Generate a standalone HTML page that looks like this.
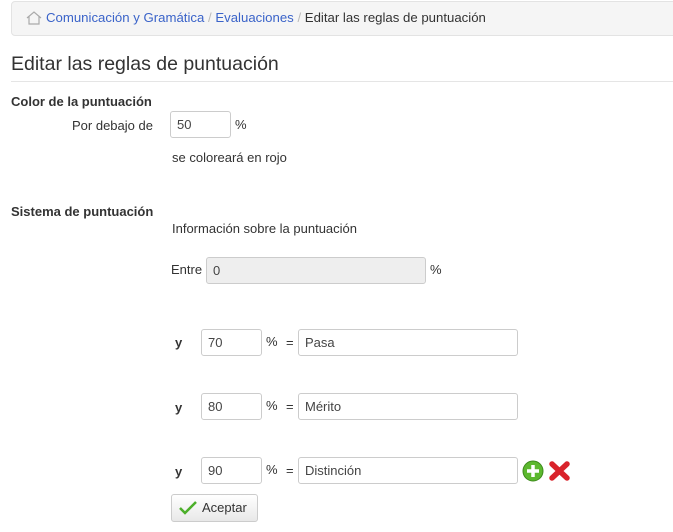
<!DOCTYPE html>
<html><head><meta charset="utf-8"><style>
body{margin:0;width:673px;height:532px;background:#fff;font-family:"Liberation Sans",sans-serif;font-size:13px;color:#333;position:relative;overflow:hidden}
.a{position:absolute;white-space:nowrap;line-height:16px}
.bc{position:absolute;left:11px;top:1px;width:680px;height:33px;background:#f5f5f5;border:1px solid #e3e3e3;border-radius:4px}
.inp{position:absolute;height:25px;border:1px solid #ccc;border-radius:3px;background:#fff;box-sizing:content-box;line-height:25px;padding-left:6px;font-size:13px;color:#444}
.b{font-weight:bold}
a{color:#3a63c9;text-decoration:none}
</style></head><body>
<div class="bc"></div>
<svg class="a" style="left:26px;top:11px" width="16" height="14" viewBox="0 0 16 14"><path d="M1 7 L8 1 L15 7 M3 5.5 V13 H13 V5.5" fill="none" stroke="#aaa" stroke-width="1.2"/></svg>
<div class="a" style="left:46px;top:10px;font-size:13.2px"><a>Comunicación y Gramática</a> <span style="color:#bbb">/</span> <a>Evaluaciones</a> <span style="color:#bbb">/</span> Editar las reglas de puntuación</div>
<div class="a" style="left:11px;top:52px;font-size:19.5px;line-height:24px">Editar las reglas de puntuación</div>
<div style="position:absolute;left:11px;top:81px;width:662px;border-top:1px solid #e5e5e5"></div>
<div class="a b" style="left:11px;top:94px">Color de la puntuación</div>
<div class="a" style="left:72px;top:118px">Por debajo de</div>
<div class="inp" style="left:170px;top:111px;width:53px">50</div>
<div class="a" style="left:235px;top:117px">%</div>
<div class="a" style="left:172px;top:150px">se coloreará en rojo</div>
<div class="a b" style="left:11px;top:204px">Sistema de puntuación</div>
<div class="a" style="left:172px;top:221px">Información sobre la puntuación</div>
<div class="a" style="left:171px;top:262px">Entre</div>
<div class="inp" style="left:206px;top:257px;width:212px;background:#eee">0</div>
<div class="a" style="left:430px;top:262px">%</div>

<div class="a b" style="left:175px;top:335px">y</div>
<div class="inp" style="left:201px;top:329px;width:53px">70</div>
<div class="a" style="left:266px;top:334px">%</div><div class="a" style="left:286px;top:335px">=</div>
<div class="inp" style="left:298px;top:329px;width:212px">Pasa</div>

<div class="a b" style="left:175px;top:400px">y</div>
<div class="inp" style="left:201px;top:393px;width:53px">80</div>
<div class="a" style="left:266px;top:398px">%</div><div class="a" style="left:286px;top:399px">=</div>
<div class="inp" style="left:298px;top:393px;width:212px">Mérito</div>

<div class="a b" style="left:175px;top:464px">y</div>
<div class="inp" style="left:201px;top:457px;width:53px">90</div>
<div class="a" style="left:266px;top:462px">%</div><div class="a" style="left:286px;top:463px">=</div>
<div class="inp" style="left:298px;top:457px;width:212px">Distinción</div>
<svg class="a" style="left:522px;top:460px" width="22" height="22" viewBox="0 0 22 22"><circle cx="11" cy="11" r="10" fill="#5cb82e" stroke="#3d8a1c"/><path d="M11 5V17M5 11H17" stroke="#fff" stroke-width="3.5"/></svg>
<svg class="a" style="left:548px;top:460px" width="23" height="22" viewBox="0 0 23 22"><path d="M4 4L19 18M19 4L4 18" stroke="#d9232b" stroke-width="5.5" stroke-linecap="round"/></svg>
<div style="position:absolute;left:171px;top:494px;width:85px;height:26px;border:1px solid #ccc;border-radius:3px;background:linear-gradient(#fff,#e8e8e8)"></div>
<svg class="a" style="left:179px;top:500px" width="18" height="15" viewBox="0 0 18 15"><path d="M1 8L6 13L17 2" fill="none" stroke="#4caf2a" stroke-width="2.5"/></svg>
<div class="a" style="left:202px;top:500px">Aceptar</div>
</body></html>
